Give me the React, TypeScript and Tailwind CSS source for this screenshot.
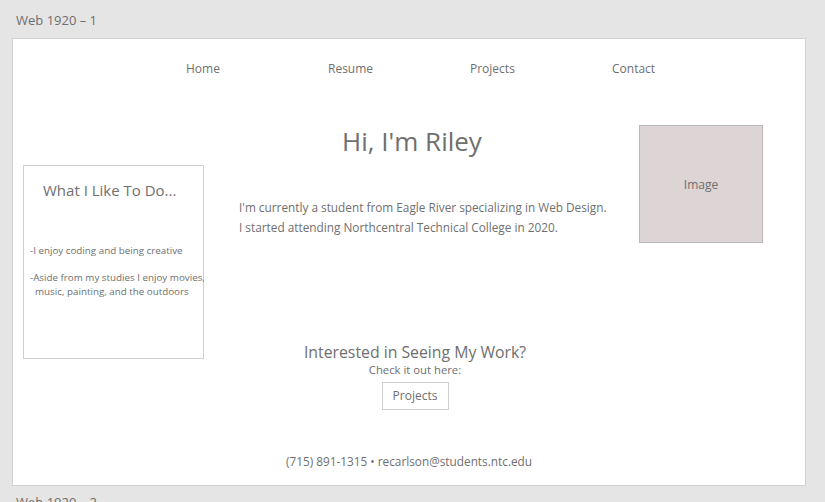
import React from 'react'

const navItems = ['Home', 'Resume', 'Projects', 'Contact']

const App: React.FC = () => {
  return (
    <div className="w-[825px] h-[502px] overflow-hidden bg-[#e5e5e5] text-[#6f6f6f] font-['Open_Sans',sans-serif]">
      {/* Artboard title */}
      <div className="h-[38px] pl-[16px] pt-[11px] text-[13px] leading-[18px]">Web 1920 – 1</div>

      {/* Artboard */}
      <div className="ml-[12px] w-[794px] h-[448px] bg-white border border-[#d2d2d2] flex flex-col">
        {/* Nav */}
        <nav className="h-[60px] pl-[173px] pt-[22px] flex text-[12px] leading-[16px]">
          {navItems.map((item) => (
            <div key={item} className="w-[142px]">
              {item}
            </div>
          ))}
        </nav>

        {/* Main */}
        <div className="flex items-start">
          {/* Left box */}
          <div className="ml-[10px] mt-[66px] w-[181px] h-[194px] border border-[#cfcfcf] shrink-0">
            <div className="pl-[19px] pt-[14px] text-[15px] leading-[20px]">What I Like To Do...</div>
            <div className="mt-[44px] pl-[6px] text-[9.8px] leading-[14px] whitespace-nowrap">
              <p>-I enjoy coding and being creative</p>
              <p className="mt-[13px]">-Aside from my studies I enjoy movies,</p>
              <p className="pl-[5px]">music, painting, and the outdoors</p>
            </div>
          </div>

          {/* Center */}
          <div className="ml-[35px] w-[400px] shrink-0">
            <h1 className="w-[346px] mt-[26px] text-center text-[26px] leading-[32px]">Hi, I'm Riley</h1>
            <div className="mt-[40px] text-[11.8px] leading-[20px]">
              <p>I'm currently a student from Eagle River specializing in Web Design.</p>
              <p>I started attending Northcentral Technical College in 2020.</p>
            </div>
            <div className="w-[352px] mt-[105px] flex flex-col items-center">
              <h2 className="text-[15.8px] leading-[20px]">Interested in Seeing My Work?</h2>
              <p className="text-[11.3px] leading-[14px] mt-[1px]">Check it out here:</p>
              <button className="mt-[5px] w-[67px] h-[28px] border border-[#cfcfcf] bg-white text-[12px] text-[#6f6f6f]">
                Projects
              </button>
            </div>
          </div>

          {/* Image placeholder */}
          <div className="mt-[26px] w-[124px] h-[118px] pt-[1px] bg-[#ddd5d5] border border-[#bdb8b8] flex items-center justify-center text-[12px] shrink-0">
            Image
          </div>
        </div>

        {/* Footer */}
        <footer className="mt-[43px] text-center text-[11.8px] leading-[16px]">
          (715) 891-1315 • recarlson@students.ntc.edu
        </footer>
      </div>

      <div className="pl-[16px] pt-[7px] text-[13px] leading-[18px]">Web 1920 – 2</div>
    </div>
  )
}

export default App
